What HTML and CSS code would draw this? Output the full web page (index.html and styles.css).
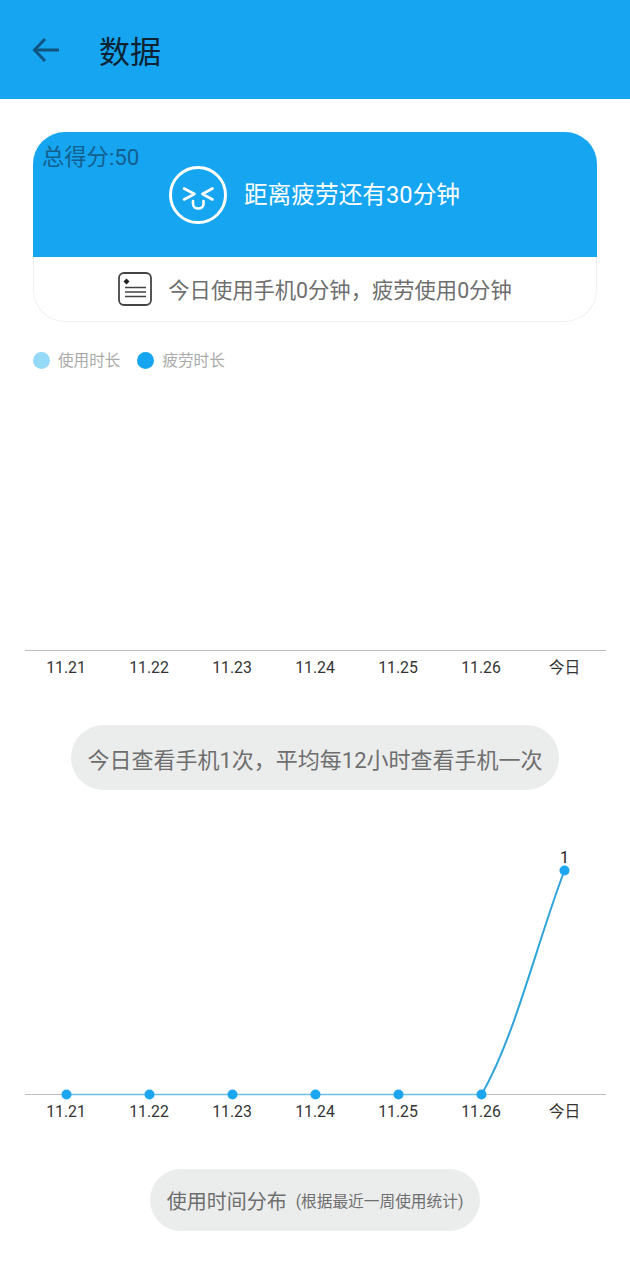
FILE: index.html
```html
<!DOCTYPE html>
<html lang="zh-CN">
<head>
    <meta charset="UTF-8">
    <meta name="viewport" content="width=device-width, initial-scale=1.0">
    <title>数据</title>
    <link rel="stylesheet" href="styles.css">
</head>
<body>

    <!-- Top bar -->
    <header class="top-bar">
        <svg class="back-icon" width="30" height="30" viewBox="0 0 30 30">
            <path d="M28 15H3.5M14 4L3.5 15L14 26" fill="none" stroke="#0f5580" stroke-width="3"/>
        </svg>
        <h1 class="page-title">数据</h1>
    </header>

    <!-- Score card -->
    <section class="score-card">
        <div class="score-top">
            <div class="score-total">总得分:50</div>
            <div class="score-main">
                <svg class="face-icon" width="58" height="58" viewBox="0 0 58 58" fill="none" stroke="#fff" stroke-linecap="round" stroke-linejoin="round">
                    <circle cx="29" cy="29" r="27.5" stroke-width="3"/>
                    <path d="M15 22.5L25.5 28L15 33.5M43.5 22.5L33.5 28L43.5 33.5" stroke-width="2.6"/>
                    <path d="M24 35V38C24 44 34.5 44 34.5 38V35" stroke-width="2.6"/>
                </svg>
                <span class="score-text">距离疲劳还有30分钟</span>
            </div>
        </div>
        <div class="score-bottom">
            <svg class="note-icon" width="34" height="34" viewBox="0 0 34 34" fill="none" stroke="#444">
                <rect x="1" y="1" width="32" height="32" rx="5" stroke-width="1.8"/>
                <path d="M7 15.5H28M7 20H28M7 24.5H28" stroke-width="1.4"/>
                <path d="M8.5 6.5L11.5 9.5L8.5 12.5L5.5 9.5Z" fill="#222" stroke="none"/>
            </svg>
            <span class="usage-text">今日使用手机0分钟，疲劳使用0分钟</span>
        </div>
    </section>

    <!-- Legend -->
    <div class="legend">
        <span class="legend-dot light"></span>
        <span class="legend-label">使用时长</span>
        <span class="legend-dot"></span>
        <span class="legend-label">疲劳时长</span>
    </div>

    <!-- Usage chart (empty) -->
    <div class="chart chart-usage">
        <div class="axis-labels">
            <span>11.21</span><span>11.22</span><span>11.23</span><span>11.24</span><span>11.25</span><span>11.26</span><span>今日</span>
        </div>
    </div>

    <div class="pill-row">
        <div class="pill pill-check">今日查看手机1次，平均每12小时查看手机一次</div>
    </div>

    <!-- Check count chart -->
    <div class="chart chart-check">
        <svg class="plot" width="581" height="238" viewBox="0 0 581 238">
            <path d="M41.5 237.5H456.5" fill="none" stroke="#6cc0e4" stroke-width="1.5"/>
            <path d="M456.5 237.5C490 180 512 85 539.5 13.5" fill="none" stroke="#2fa4d8" stroke-width="2"/>
            <circle cx="41.5" cy="237.5" r="5" fill="#1ba6ef"/>
            <circle cx="124.5" cy="237.5" r="5" fill="#1ba6ef"/>
            <circle cx="207.5" cy="237.5" r="5" fill="#1ba6ef"/>
            <circle cx="290.5" cy="237.5" r="5" fill="#1ba6ef"/>
            <circle cx="373.5" cy="237.5" r="5" fill="#1ba6ef"/>
            <circle cx="456.5" cy="237.5" r="5" fill="#1ba6ef"/>
            <circle cx="539.5" cy="13.5" r="5" fill="#1ba6ef"/>
            <text class="plot-value" x="539.5" y="6" text-anchor="middle">1</text>
        </svg>
        <div class="axis-labels">
            <span>11.21</span><span>11.22</span><span>11.23</span><span>11.24</span><span>11.25</span><span>11.26</span><span>今日</span>
        </div>
    </div>

    <div class="pill-row">
        <div class="pill pill-dist">使用时间分布<small>(根据最近一周使用统计)</small></div>
    </div>

</body>
</html>
```

FILE: styles.css
```css
/* General styles */
body {
    margin: 0;
    padding: 0;
    background-color: #fff;
    font-family: Roboto, "Noto Sans CJK SC", sans-serif;
    color: #666;
    height: 1280px;
    overflow: hidden;
}

/* Top bar */
.top-bar {
    height: 99px;
    background-color: #16a5f1;
    display: flex;
    align-items: center;
    padding-left: 31px;
    box-sizing: border-box;
}

.back-icon {
    margin-right: 38px;
}

.page-title {
    margin: 0;
    font-size: 31px;
    font-weight: 400;
    color: #0d2233;
}

/* Score card */
.score-card {
    margin: 33px 33px 0;
    height: 190px;
    border-radius: 32px;
    overflow: hidden;
}

.score-top {
    height: 125px;
    background-color: #16a5f1;
    box-sizing: border-box;
    padding-top: 11px;
}

.score-total {
    font-size: 22.3px;
    line-height: 28px;
    padding-left: 9px;
    color: #13608f;
}

.score-main {
    display: flex;
    align-items: center;
    justify-content: center;
    gap: 17px;
    padding-right: 1px;
    margin-top: -5px;
}

.score-text {
    font-size: 23.7px;
    color: #fff;
    position: relative;
    top: -2px;
}

.score-bottom {
    height: 65px;
    box-sizing: border-box;
    border: 1px solid #eee;
    border-top: none;
    border-radius: 0 0 32px 32px;
    display: flex;
    align-items: center;
    justify-content: center;
    gap: 16px;
}

.note-icon {
    margin-top: -1px;
}

.usage-text {
    font-size: 21.3px;
    color: #6e6e6e;
    position: relative;
    top: -1px;
}

/* Legend */
.legend {
    display: flex;
    align-items: center;
    margin: 28px 33px 0;
    height: 20px;
    font-size: 15.6px;
    color: #aaa;
}

.legend-dot {
    width: 17px;
    height: 17px;
    border-radius: 50%;
    background-color: #16a5f1;
    margin-right: 8px;
}

.legend-dot.light {
    background-color: #94daf8;
}

.legend-label {
    margin-right: 17px;
    position: relative;
    top: -1px;
}

/* Charts */
.chart {
    margin: 0 24.5px;
    display: flex;
    flex-direction: column;
    justify-content: flex-end;
}

.chart-usage {
    height: 314px;
}

.chart-check {
    margin-top: 43px;
    height: 295px;
}

.plot {
    display: block;
    overflow: visible;
    position: relative;
    z-index: 1;
    margin-bottom: -1px;
}

.plot-value {
    font-size: 16px;
    fill: #222;
}

.axis-labels {
    display: grid;
    grid-template-columns: repeat(7, 1fr);
    border-top: 1.5px solid #bdbdbd;
    height: 33px;
    line-height: 33px;
    font-size: 15.8px;
    color: #333;
    text-align: center;
}

.axis-labels span:last-child {
    padding-left: 1px;
}

/* Pills */
.pill-row {
    display: flex;
    justify-content: center;
}

.pill {
    background-color: #ebeded;
    color: #6e6e6e;
    display: flex;
    align-items: center;
}

.pill-check {
    margin-top: 41px;
    height: 65px;
    padding: 0 16.5px;
    border-radius: 33px;
    font-size: 22px;
}

.pill-dist {
    margin-top: 41px;
    height: 62px;
    padding: 0 17px;
    border-radius: 31px;
    font-size: 20px;
}

.pill-dist small {
    font-size: 15.7px;
    margin-left: 9px;
}
```
